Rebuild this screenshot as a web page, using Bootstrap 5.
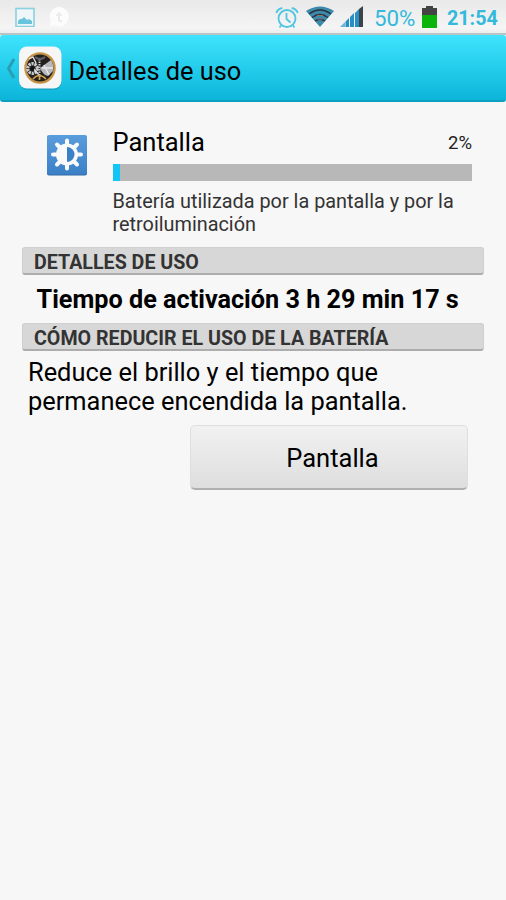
<!DOCTYPE html>
<html lang="es">
<head>
<meta charset="utf-8">
<meta name="viewport" content="width=device-width, initial-scale=1">
<title>Detalles de uso</title>
<link href="https://cdn.jsdelivr.net/npm/bootstrap@5.3.0/dist/css/bootstrap.min.css" rel="stylesheet">
<style>
body{font-family:Roboto,"Liberation Sans",sans-serif;background:#f7f7f7;color:#000;min-height:900px;overflow:hidden}
svg{display:block;flex:none}
.status{height:35px;background:linear-gradient(#e9e9e9,#f5f5f5 85%,#ececec);border-bottom:2px solid #b9c4c6;color:#33b9dc;padding:0 9px 0 15px}
.ic-chat{margin-left:13px}
.ic-alarm{margin-left:-1px;margin-right:7px}
.ic-signal{margin:0 11px 0 6px}
.ic-battery{margin:0 10px 0 5px}
.pct{font-size:22.300px;line-height:34px;padding-top:2px;width:42px;margin-left:-1px;margin-right:1px;white-space:nowrap}
.clock{font-size:19.700px;line-height:34px;padding-top:4px;font-weight:700;width:50px;white-space:nowrap}
.topbar{height:67px;background:linear-gradient(#3fe3fc,#25cdec 50%,#0cb5d9);border-bottom:2px solid #0ba0c0;border-radius:3px;padding-left:5px}
.app-icon{margin:1px 0 0 2px}
.topbar h1{font-size:25.350px;line-height:30px;padding:7px 0 0 5.500px}
.usage{padding:25px 34px 0 47px}
.usage-icon{margin-top:8px;width:65.500px}
.name{font-size:25.500px;line-height:30px}
.value{font-size:18.500px;line-height:30px;padding-top:1px;margin-bottom:-1px;color:#222}
.meter{height:17px;border-radius:0;background:#b8b8b8;margin-top:7px}
.meter .progress-bar{background:#12c5f7}
.desc{font-size:19.850px;line-height:23px;color:#333;padding-top:9px}
.section{height:28px;margin:0 22px;padding-left:11px;background:#d7d7d7;border:1px solid #cfcfcf;border-bottom:2px solid #adadad;border-radius:3px;font-size:19.650px;line-height:29px;font-weight:700;color:#333;white-space:nowrap}
.usage + .section{margin-top:11px}
.time{font-size:25.220px;line-height:49px;height:48px;font-weight:700;padding-left:36.500px;white-space:nowrap}
.tip{font-size:25.400px;line-height:29px;padding:7px 28px 0;height:74px;white-space:nowrap}
.action{width:278px;height:65px;margin-right:38px;padding:8px 0 6px 7px;border:1px solid #dedede;border-bottom:2px solid #b0b0b0;border-radius:5px;background:linear-gradient(#f1f1f1,#dedede);font-size:25.500px;color:#000}
</style>
<script src="https://cdn.jsdelivr.net/npm/bootstrap@5.3.0/dist/js/bootstrap.bundle.min.js"></script>
</head>
<body>
<header>
<div class="status d-flex align-items-center">
  <svg width="20" height="20" viewBox="0 0 20 20"><rect x="1" y="1.500" width="18" height="18" fill="#eef6f8" stroke="#8bd0e0" stroke-width="1.600"/><path d="M3 17v-3l2-2 2 0 2-2 3 3 2-1 3 2v3z" fill="#68c3dc"/></svg>
  <svg class="ic-chat" width="22" height="22" viewBox="0 0 22 22"><path d="M11 1a9.700 9.700 0 1 1-4 18.500L1 20l2-4.500A9.700 9.700 0 0 1 11 1z" fill="#fcfcfc"/><path d="M11 6v8q0 2 3 1M8 9h6" fill="none" stroke="#ebebeb" stroke-width="2"/></svg>
  <div class="ms-auto d-flex align-items-center">
  <svg class="ic-alarm" width="24" height="24" viewBox="0 0 24 24" fill="none" stroke="#50c5e0" stroke-width="1.800"><circle cx="12" cy="13.500" r="8.500"/><path d="M11.500 8v6l4 3.500M1.300 8Q2.500 4 7.300 3M22.700 8Q21.500 4 16.700 3M6 20.500l-1.500 2M18 20.500l1.500 2"/></svg>
  <svg width="28" height="24" viewBox="0 0 28 24"><path d="M0 6Q14-3 28 6L14 22z" fill="#3d89ab"/><path d="M3 9Q14 1 25 9M6 12.500Q14 6.500 22 12.500M9 16Q14 12.500 19 16" fill="none" stroke="#26333c" stroke-width="1.400"/><path d="M11 10.500h6M11 14h6" stroke="#8b7770" stroke-width="1"/></svg>
  <svg class="ic-signal" width="24" height="24" viewBox="0 0 24 24"><path d="M0 22l5-5v5z" fill="#68b5d8"/><path d="M5.500 22v-5.500L9 13v9zM10 22V12l4-4v14zM15 22V8l4-4v18z" fill="#278fc4"/><path d="M19 22V4l4-3v21z" fill="#3d4448"/></svg>
  <span class="pct">50%</span>
  <svg class="ic-battery" width="15" height="22" viewBox="0 0 15 22"><path d="M0 2h4V0h7v2h4v8H0z" fill="#434343"/><path d="M0 9h15v13H0z" fill="#09b50b"/></svg>
  <span class="clock">21:54</span>
  </div>
</div>
<nav class="topbar d-flex align-items-center">
  <svg width="11" height="22" viewBox="0 0 11 22"><path d="M9 2L3.500 11.500 9 21" fill="none" stroke="#2a9fb4" stroke-width="3"/></svg>
  <svg class="app-icon" width="45" height="46" viewBox="0 0 45 46">
    <rect x="1.500" y="3" width="42" height="42" rx="8" fill="#1594b0" opacity=".6"/><rect x="1" y="1.500" width="42.500" height="42" rx="8" fill="#f6f6f7"/>
    <circle cx="22" cy="23" r="14.600" fill="#23201e" stroke="#c69345" stroke-width="2.300"/>
    <circle cx="14.500" cy="23.500" r="4.800" fill="none" stroke="#c9cace" stroke-width="3.200" stroke-dasharray="2.200 .8"/>
    <path d="M22 23l11-8q3 4 2 11l-5 5q-5-1-8-8z" fill="#b6b8bc"/><path d="M11 14l4-2 3 6M15 23l6 7M24 23l11 0M26 20l5 10" fill="none" stroke="#e9e9eb" stroke-width="1.300"/>
    <path d="M21.500 14v16" stroke="#c9cace" stroke-width="2" stroke-dasharray="1.500 1"/>
    <path d="M15 34q6-7 13 0M21.500 30v5" fill="none" stroke="#d2a253" stroke-width="1.700"/><path d="M17 12q5 4 10 0" fill="none" stroke="#62636a" stroke-width="2"/><circle cx="14.500" cy="23.500" r="2" fill="#111"/>
  </svg>
  <h1 class="m-0 fw-normal">Detalles de uso</h1>
</nav>
</header>
<main>
<section class="usage d-flex">
  <div class="usage-icon flex-shrink-0">
    <svg width="40" height="41" viewBox="0 0 40 41"><defs><linearGradient id="blue" x2="0" y2="1"><stop stop-color="#5a9ddd"/><stop offset="1" stop-color="#3b7fc6"/></linearGradient></defs><rect y="1" width="40" height="39.500" rx="2" fill="#326ba8"/><rect width="40" height="39.500" rx="2" fill="url(#blue)"/>
    <g stroke="#fafafa" stroke-width="4" stroke-linecap="round"><path d="M20 5.500v28M6 19.500h28M10 9.500l20 20M30 9.500l-20 20"/></g><circle cx="20" cy="19.500" r="11" fill="#fafafa"/><path d="M20 12a7.500 7.500 0 0 1 0 15z" fill="#3c80c7"/></svg>
  </div>
  <div class="flex-grow-1">
    <div class="d-flex justify-content-between"><span class="name">Pantalla</span><span class="value">2%</span></div>
    <div class="progress meter"><div class="progress-bar" style="width:2.100%"></div></div>
    <p class="desc mb-0">Batería utilizada por la pantalla y por la<br>retroiluminación</p>
  </div>
</section>
<h2 class="section">DETALLES DE USO</h2>
<div class="time">Tiempo de activación 3 h 29 min 17 s</div>
<h2 class="section">CÓMO REDUCIR EL USO DE LA BATERÍA</h2>
<p class="tip m-0">Reduce el brillo y el tiempo que<br>permanece encendida la pantalla.</p>
<div class="d-flex justify-content-end"><button class="btn action" type="button">Pantalla</button></div>
</main>
</body>
</html>
